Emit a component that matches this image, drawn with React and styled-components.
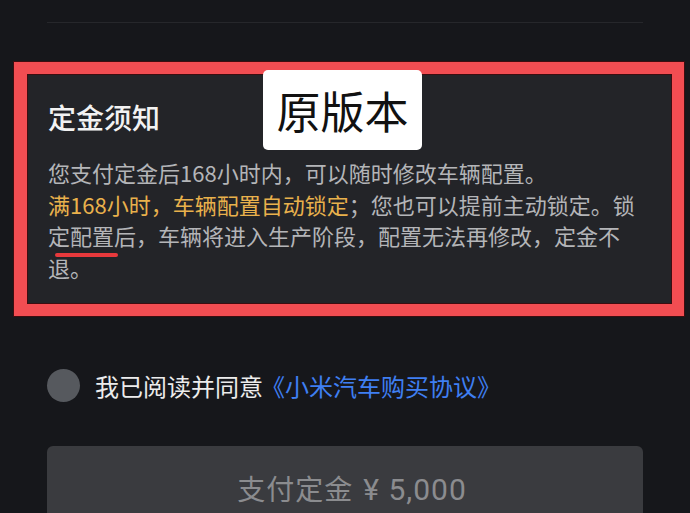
import React from "react";
import styled, { createGlobalStyle } from "styled-components";

const GlobalStyle = createGlobalStyle`
  html, body {
    margin: 0;
    padding: 0;
    background: #16171b;
  }
  body {
    font-family: "Noto Sans CJK SC", "Noto Sans", sans-serif;
    overflow: hidden;
  }
`;

const Page = styled.div`
  width: 690px;
  height: 513px;
  padding-top: 22px;
  box-sizing: border-box;
  overflow: hidden;
`;

const Divider = styled.div`
  height: 1px;
  margin: 0 47px;
  background: #26272b;
`;

const Highlight = styled.section`
  position: relative;
  margin: 39px 6px 0 14px;
  border: 12px solid #f24d52;
  border-left-width: 13px;
  box-shadow: 0 0 0 1px #3d0d10, inset 0 0 0 1px #3d0d10;
  background: #232428;
  padding: 25px 25px 21px 21px;
`;

const Badge = styled.div`
  position: absolute;
  left: 236px;
  top: -4px;
  width: 159px;
  height: 80px;
  border-radius: 5px;
  background: #ffffff;
  color: #111;
  font-size: 44px;
  line-height: 80px;
  text-align: center;
`;

const Title = styled.h2`
  margin: 0;
  font-size: 28px;
  line-height: 36px;
  font-weight: 500;
  color: #f2f2f2;
`;

const Body = styled.p`
  margin: 22px 0 0;
  width: 598px;
  font-size: 22px;
  line-height: 31.5px;
  color: #b4b5b8;
`;

const Accent = styled.span`
  color: #e9b14c;
`;

const Underline = styled.span`
  position: absolute;
  left: 28px;
  top: 179px;
  width: 63px;
  height: 4px;
  border-radius: 2px;
  background: #e8393c;
`;

const AgreeRow = styled.label`
  display: flex;
  align-items: center;
  gap: 15px;
  height: 40px;
  margin: 49px 47px 0;
  font-size: 24px;
  color: #ececec;
`;

const Radio = styled.span`
  width: 33px;
  height: 33px;
  border-radius: 50%;
  background: #56595e;
  flex-shrink: 0;
`;

const Link = styled.span`
  color: #3f7ff2;
  margin-left: -2px;
`;

const PayButton = styled.button`
  display: block;
  width: 596px;
  height: 86px;
  margin: 41px 0 0 47px;
  border: none;
  border-radius: 6px;
  background: #3a3b3f;
  color: #8b8c8f;
  font-family: Roboto, "Noto Sans CJK SC", sans-serif;
  font-size: 28px;
  letter-spacing: 1px;
  padding: 0 0 2px 14px;
`;

const Amount = styled.span`
  font-size: 30px;
  margin-left: 10px;
`;

export default function App() {
  return (
    <Page>
      <GlobalStyle />
      <Divider />
      <Highlight>
        <Badge>原版本</Badge>
        <Title>定金须知</Title>
        <Body>
          您支付定金后168小时内，可以随时修改车辆配置。
          <br />
          <Accent>满168小时，车辆配置自动锁定</Accent>；您也可以提前主动锁定。锁定配置后，车辆将进入生产阶段，配置无法再修改，定金不退。
        </Body>
        <Underline />
      </Highlight>
      <AgreeRow>
        <Radio />
        <span>
          我已阅读并同意<Link>《小米汽车购买协议》</Link>
        </span>
      </AgreeRow>
      <PayButton>
        支付定金<Amount>¥ 5,000</Amount>
      </PayButton>
    </Page>
  );
}
